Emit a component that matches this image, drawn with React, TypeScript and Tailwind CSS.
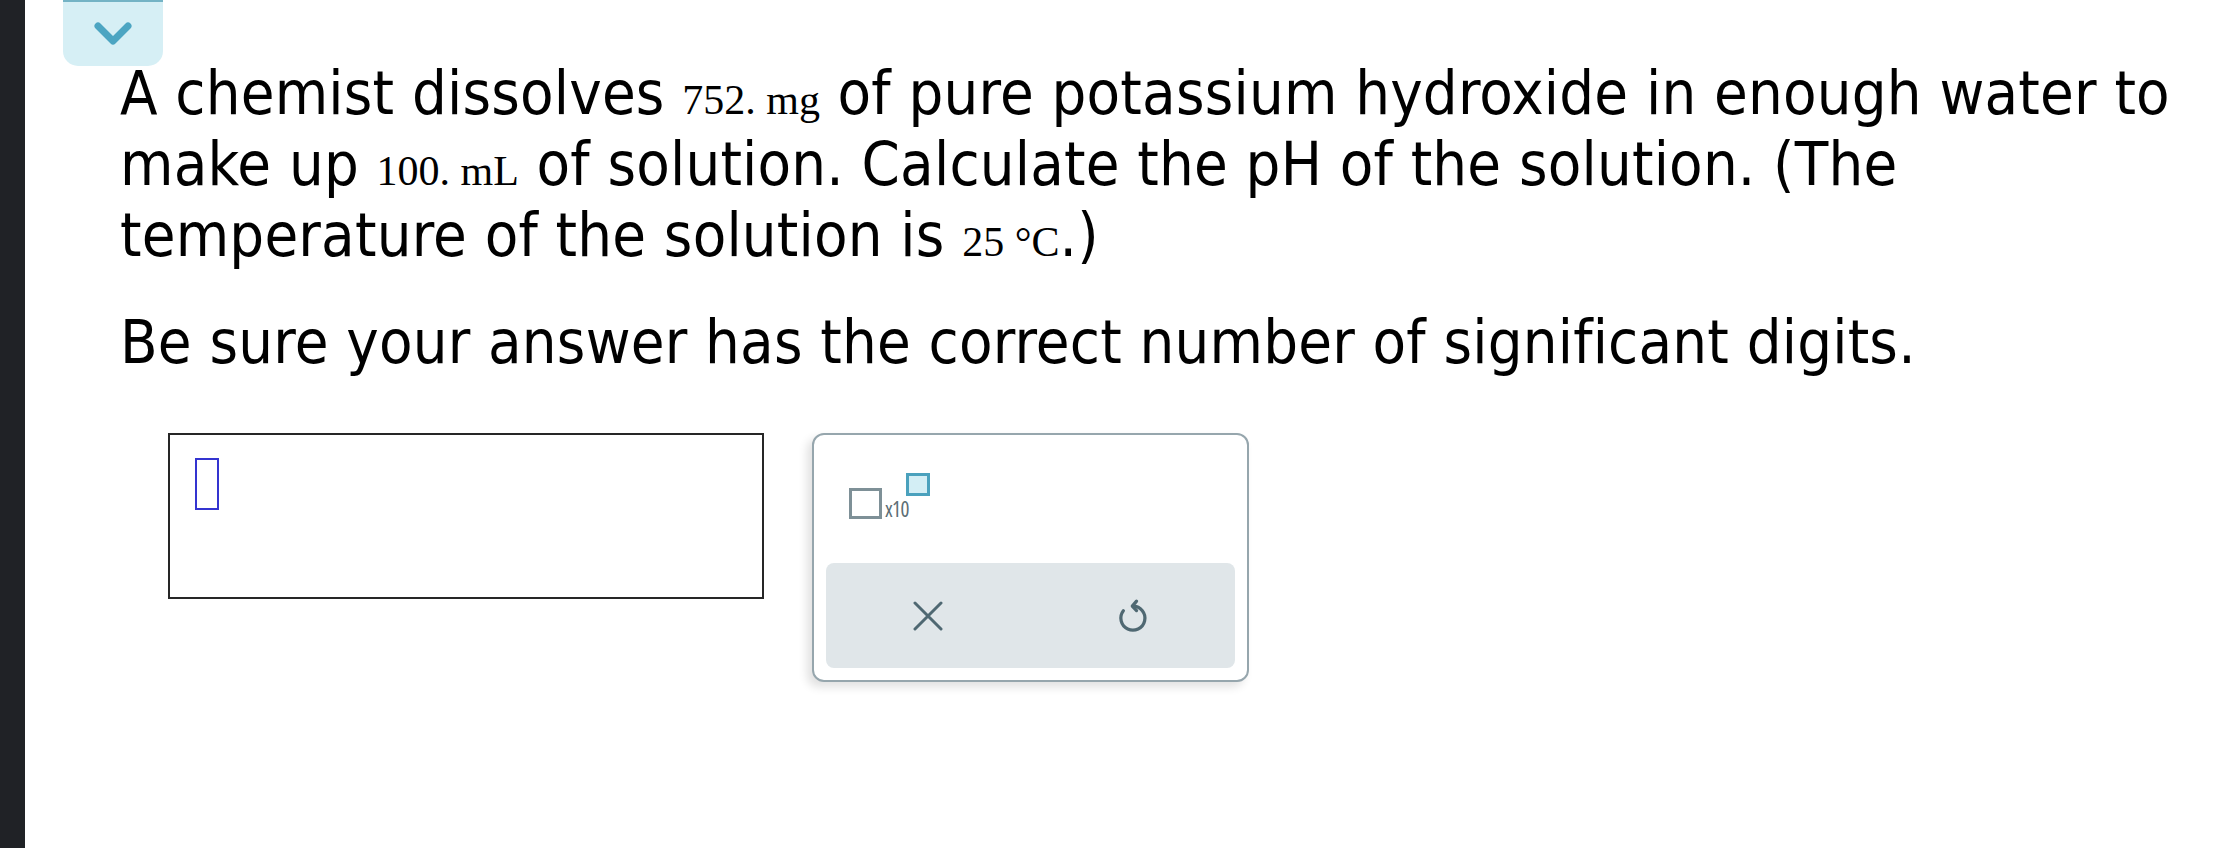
export default function App() {
  const sans = "font-['DejaVu_Sans_Condensed','DejaVu_Sans',sans-serif] font-stretch-condensed";
  const serif = "font-['Liberation_Serif','Times_New_Roman',serif] text-[42px] leading-[30px] font-normal tracking-normal";
  return (
    <div className="flex h-[848px] w-full bg-white">
      <div className="w-[25px] shrink-0 bg-[#202226]" />
      <div className="relative flex-1 bg-white">
        <button className="absolute left-[38px] top-0 flex h-[66px] w-[100px] items-center justify-center rounded-b-[15px] border-t-2 border-[#74b3c5] bg-[#d6eff5]">
          <svg width="100" height="66" viewBox="0 0 100 66" fill="none">
            <polyline points="35,25 50,40 65,25" stroke="#4ca5c2" strokeWidth="7" strokeLinecap="round" strokeLinejoin="round" />
          </svg>
        </button>
        <div className={`w-[2178px] pl-[95px] pt-[57px] text-black ${sans}`}>
          <p className="text-[61px] leading-[71px] tracking-[0.2px]">
            A chemist dissolves <span className={serif}>752. mg</span> of pure potassium hydroxide in enough water to make up{" "}
            <span className={serif}>100. mL</span> of solution. Calculate the pH of the solution. (The temperature of the solution is{" "}
            <span className={serif}>25 °C</span>.)
          </p>
          <p className="mt-[36px] text-[61px] leading-[71px] tracking-[0.2px]">Be sure your answer has the correct number of significant digits.</p>
          <div className="ml-[48px] mt-[56px] flex items-start gap-[48px]">
            <div className="h-[166px] w-[596px] border-2 border-[#262626] bg-white pl-[25px] pt-[23px]">
              <div className="h-[52px] w-[24px] border-2 border-[#3434d0]" />
            </div>
            <div className="flex h-[249px] w-[437px] flex-col justify-between rounded-[12px] border-2 border-[#96a6ad] bg-white shadow-[-5px_5px_10px_rgba(0,0,0,0.12)]">
              <div className="relative ml-[35px] mt-[38px] h-[46px] w-[82px]">
                <div className="absolute left-0 top-[15px] h-[31px] w-[33px] border-[3px] border-[#7e9097]" />
                <span className="absolute left-[36px] top-[26px] font-['Open_Sans',sans-serif] text-[21px] leading-none tracking-[-0.6px] text-[#5d6e75]">x10</span>
                <div className="absolute left-[57px] top-0 h-[23px] w-[24px] border-[3px] border-[#4aa1bd] bg-[#d3eef5]" />
              </div>
              <div className="mx-[12px] mb-[12px] grid h-[105px] grid-cols-2 rounded-[8px] bg-[#e0e6e9]">
                <div className="flex items-center justify-center">
                  <svg width="30" height="30" viewBox="0 0 30 30" fill="none">
                    <path d="M2 2 L28 28 M28 2 L2 28" stroke="#4f6872" strokeWidth="3" strokeLinecap="round" />
                  </svg>
                </div>
                <div className="flex items-center justify-center">
                  <svg width="34" height="40" viewBox="0 0 24 28" fill="none">
                    <path d="M5.2 10.3 A8.5 8.5 0 1 0 12 7" stroke="#4f6872" strokeWidth="2.3" strokeLinecap="round" />
                    <path d="M14.5 3.5 L11.5 7 L14.5 10.2" stroke="#4f6872" strokeWidth="2.3" strokeLinecap="round" strokeLinejoin="round" />
                  </svg>
                </div>
              </div>
            </div>
          </div>
        </div>
      </div>
    </div>
  );
}
